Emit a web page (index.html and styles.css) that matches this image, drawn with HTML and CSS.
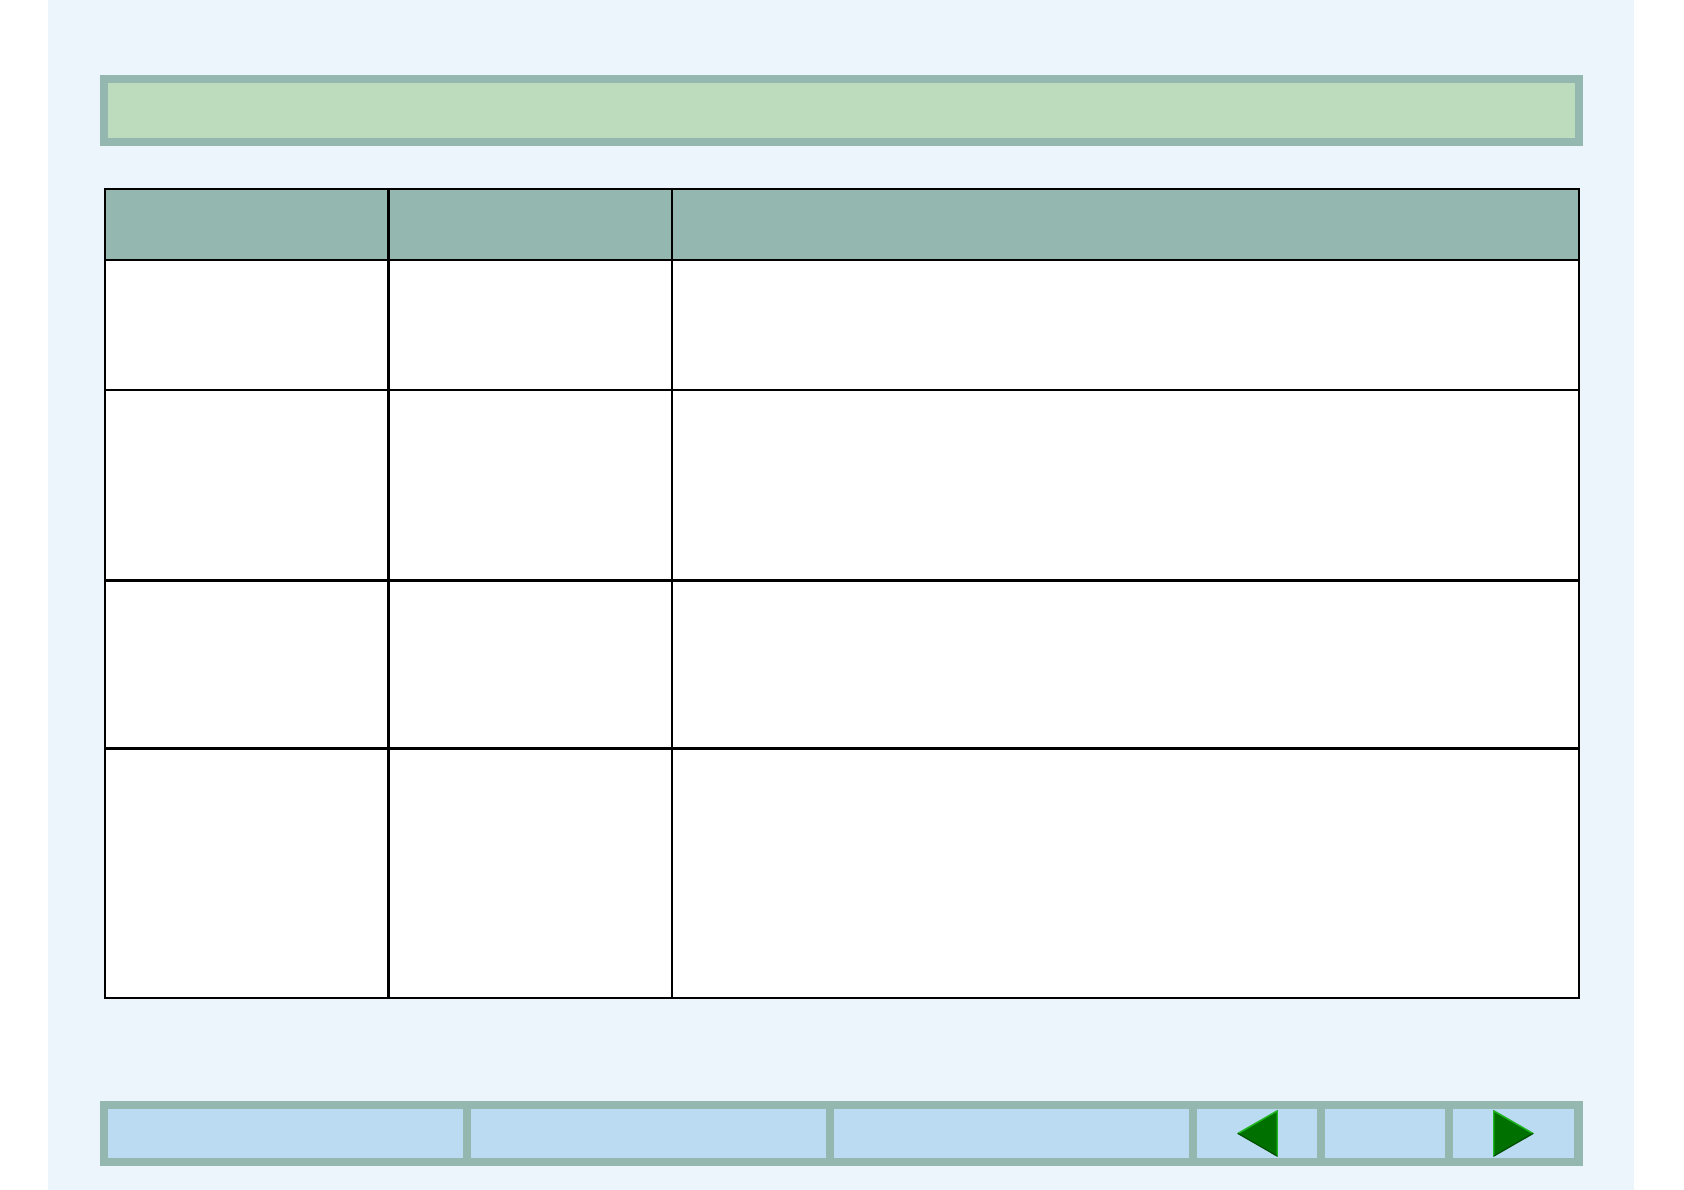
FILE: index.html
```html
<!DOCTYPE html>
<html lang="en">
<head>
  <meta charset="UTF-8">
  <meta name="viewport" content="width=device-width, initial-scale=1.0">
  <title>Page</title>
  <link rel="stylesheet" href="styles.css">
</head>
<body>

<div class="page">
  <div class="title-bar"></div>

  <table class="grid">
    <colgroup>
      <col class="col-a">
      <col class="col-b">
      <col>
    </colgroup>
    <tr class="head">
      <th></th>
      <th></th>
      <th></th>
    </tr>
    <tr class="row-1">
      <td></td>
      <td></td>
      <td></td>
    </tr>
    <tr class="row-2">
      <td></td>
      <td></td>
      <td></td>
    </tr>
    <tr class="row-3">
      <td></td>
      <td></td>
      <td></td>
    </tr>
    <tr class="row-4">
      <td></td>
      <td></td>
      <td></td>
    </tr>
  </table>

  <div class="nav-bar">
    <div class="nav-cell wide"></div>
    <div class="nav-cell wide"></div>
    <div class="nav-cell wide"></div>
    <div class="nav-cell narrow">
      <svg class="arrow" width="41" height="47" viewBox="0 0 41 47">
        <polygon points="0,23.5 41,0 41,47" fill="#007000"/>
        <line x1="1" y1="23.5" x2="40" y2="1" stroke="#20b820" stroke-width="1.5"/>
        <line x1="40.3" y1="1" x2="40.3" y2="46" stroke="#20b820" stroke-width="1.4"/>
        <line x1="1" y1="23.5" x2="40" y2="46" stroke="#004a00" stroke-width="1.2"/>
      </svg>
    </div>
    <div class="nav-cell narrow"></div>
    <div class="nav-cell narrow last">
      <svg class="arrow" width="41" height="47" viewBox="0 0 41 47">
        <polygon points="0,0 41,23.5 0,47" fill="#007000"/>
        <line x1="1" y1="1" x2="40" y2="23.5" stroke="#20b820" stroke-width="1.5"/>
        <line x1="0.7" y1="1" x2="0.7" y2="46" stroke="#20b820" stroke-width="1.4"/>
        <line x1="1" y1="46" x2="40" y2="23.5" stroke="#004a00" stroke-width="1.2"/>
      </svg>
    </div>
  </div>
</div>

</body>
</html>
```

FILE: styles.css
```css
body {
  margin: 0;
  background-color: #fff;
  font-family: "Liberation Sans", Arial, sans-serif;
}

.page {
  margin-left: 48px;
  width: 1586px;
  height: 1190px;
  padding-top: 75px;
  box-sizing: border-box;
  background-color: #ecf4fc;
  overflow: hidden;
}

.title-bar {
  margin-left: 52px;
  width: 1483px;
  height: 71px;
  box-sizing: border-box;
  border: 8px solid #94b8b0;
  background-color: #bddbbd;
}

.grid {
  margin: 42px 0 0 56px;
  width: 1476px;
  border-collapse: collapse;
  table-layout: fixed;
  background-color: #fff;
}

.grid th,
.grid td {
  border: 2px solid #000;
  padding: 0;
}

.grid th:first-child,
.grid td:first-child {
  border-right-width: 3px;
}

.grid th {
  background-color: #94b8b0;
}

.col-a {
  width: 283px;
}

.col-b {
  width: 284px;
}

.head {
  height: 71px;
}

.row-1 {
  height: 130px;
}

.row-2 {
  height: 190px;
}

.row-3 td,
.row-4 td {
  border-top-width: 3px;
}

.row-3 {
  height: 168px;
}

.row-4 {
  height: 250px;
}

.nav-bar {
  margin: 102px 0 0 52px;
  width: 1483px;
  height: 65px;
  box-sizing: border-box;
  padding: 8px;
  display: flex;
  gap: 8px;
  background-color: #94b8b0;
}

.nav-cell {
  background-color: #bbdbf3;
  display: flex;
  align-items: center;
  justify-content: center;
}

.nav-cell.wide {
  width: 355px;
}

.nav-cell.narrow {
  width: 120px;
}

.nav-cell.last {
  width: 121px;
}

.arrow {
  display: block;
}
```
